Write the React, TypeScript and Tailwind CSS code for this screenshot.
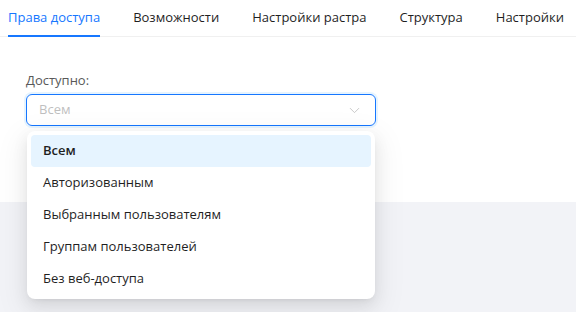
import { ChevronDown } from "lucide-react";

const TABS = ["Права доступа", "Возможности", "Настройки растра", "Структура", "Настройки"];

const OPTIONS = [
  "Всем",
  "Авторизованным",
  "Выбранным пользователям",
  "Группам пользователей",
  "Без веб-доступа",
];

export default function App() {
  return (
    <div
      className="relative flex h-[312px] w-[576px] flex-col overflow-hidden bg-white text-[13px] text-[#1f1f1f]"
      style={{ fontFamily: '"Segoe UI", "Open Sans", "Noto Sans", sans-serif' }}
    >
      <nav className="flex h-[37px] shrink-0 gap-[33px] border-b border-[#f0f0f0] px-2">
        {TABS.map((tab, i) => (
          <div
            key={tab}
            className={
              i === 0
                ? "relative flex items-center whitespace-nowrap text-[#1677ff]"
                : "relative flex items-center whitespace-nowrap text-[#1f1f1f]"
            }
          >
            {tab}
            {i === 0 ? (
              <span className="absolute bottom-[-1px] left-0 right-0 h-[2px] bg-[#1677ff]" />
            ) : null}
          </div>
        ))}
      </nav>

      <section className="h-[165px] shrink-0 px-[26px] pt-[33px]">
        <p className="mb-[4px] leading-[20px] text-[#595959]">Доступно:</p>
        <div className="relative w-[350px]">
          <div className="flex h-[32px] items-center justify-between rounded-[6px] border border-[#1677ff] pl-3 pr-[12px] shadow-[0_0_0_2px_rgba(5,145,255,0.1)]">
            <span className="text-[#bfbfbf]">Всем</span>
            <ChevronDown size={17} strokeWidth={1.2} className="text-[#bfbfbf]" />
          </div>

          <ul className="absolute left-[1px] top-[37px] z-10 w-[348px] rounded-[8px] bg-white p-1 shadow-[0_6px_16px_0_rgba(0,0,0,0.08),0_3px_6px_-4px_rgba(0,0,0,0.12),0_9px_28px_8px_rgba(0,0,0,0.05)]">
            {OPTIONS.map((opt, i) => (
              <li
                key={opt}
                className={
                  i === 0
                    ? "flex h-[32px] items-center rounded-[4px] bg-[#e6f4ff] px-3 font-semibold"
                    : "flex h-[32px] items-center px-3"
                }
              >
                {opt}
              </li>
            ))}
          </ul>
        </div>
      </section>

      <div className="flex-1 bg-[#f2f3f7]" />
    </div>
  );
}
